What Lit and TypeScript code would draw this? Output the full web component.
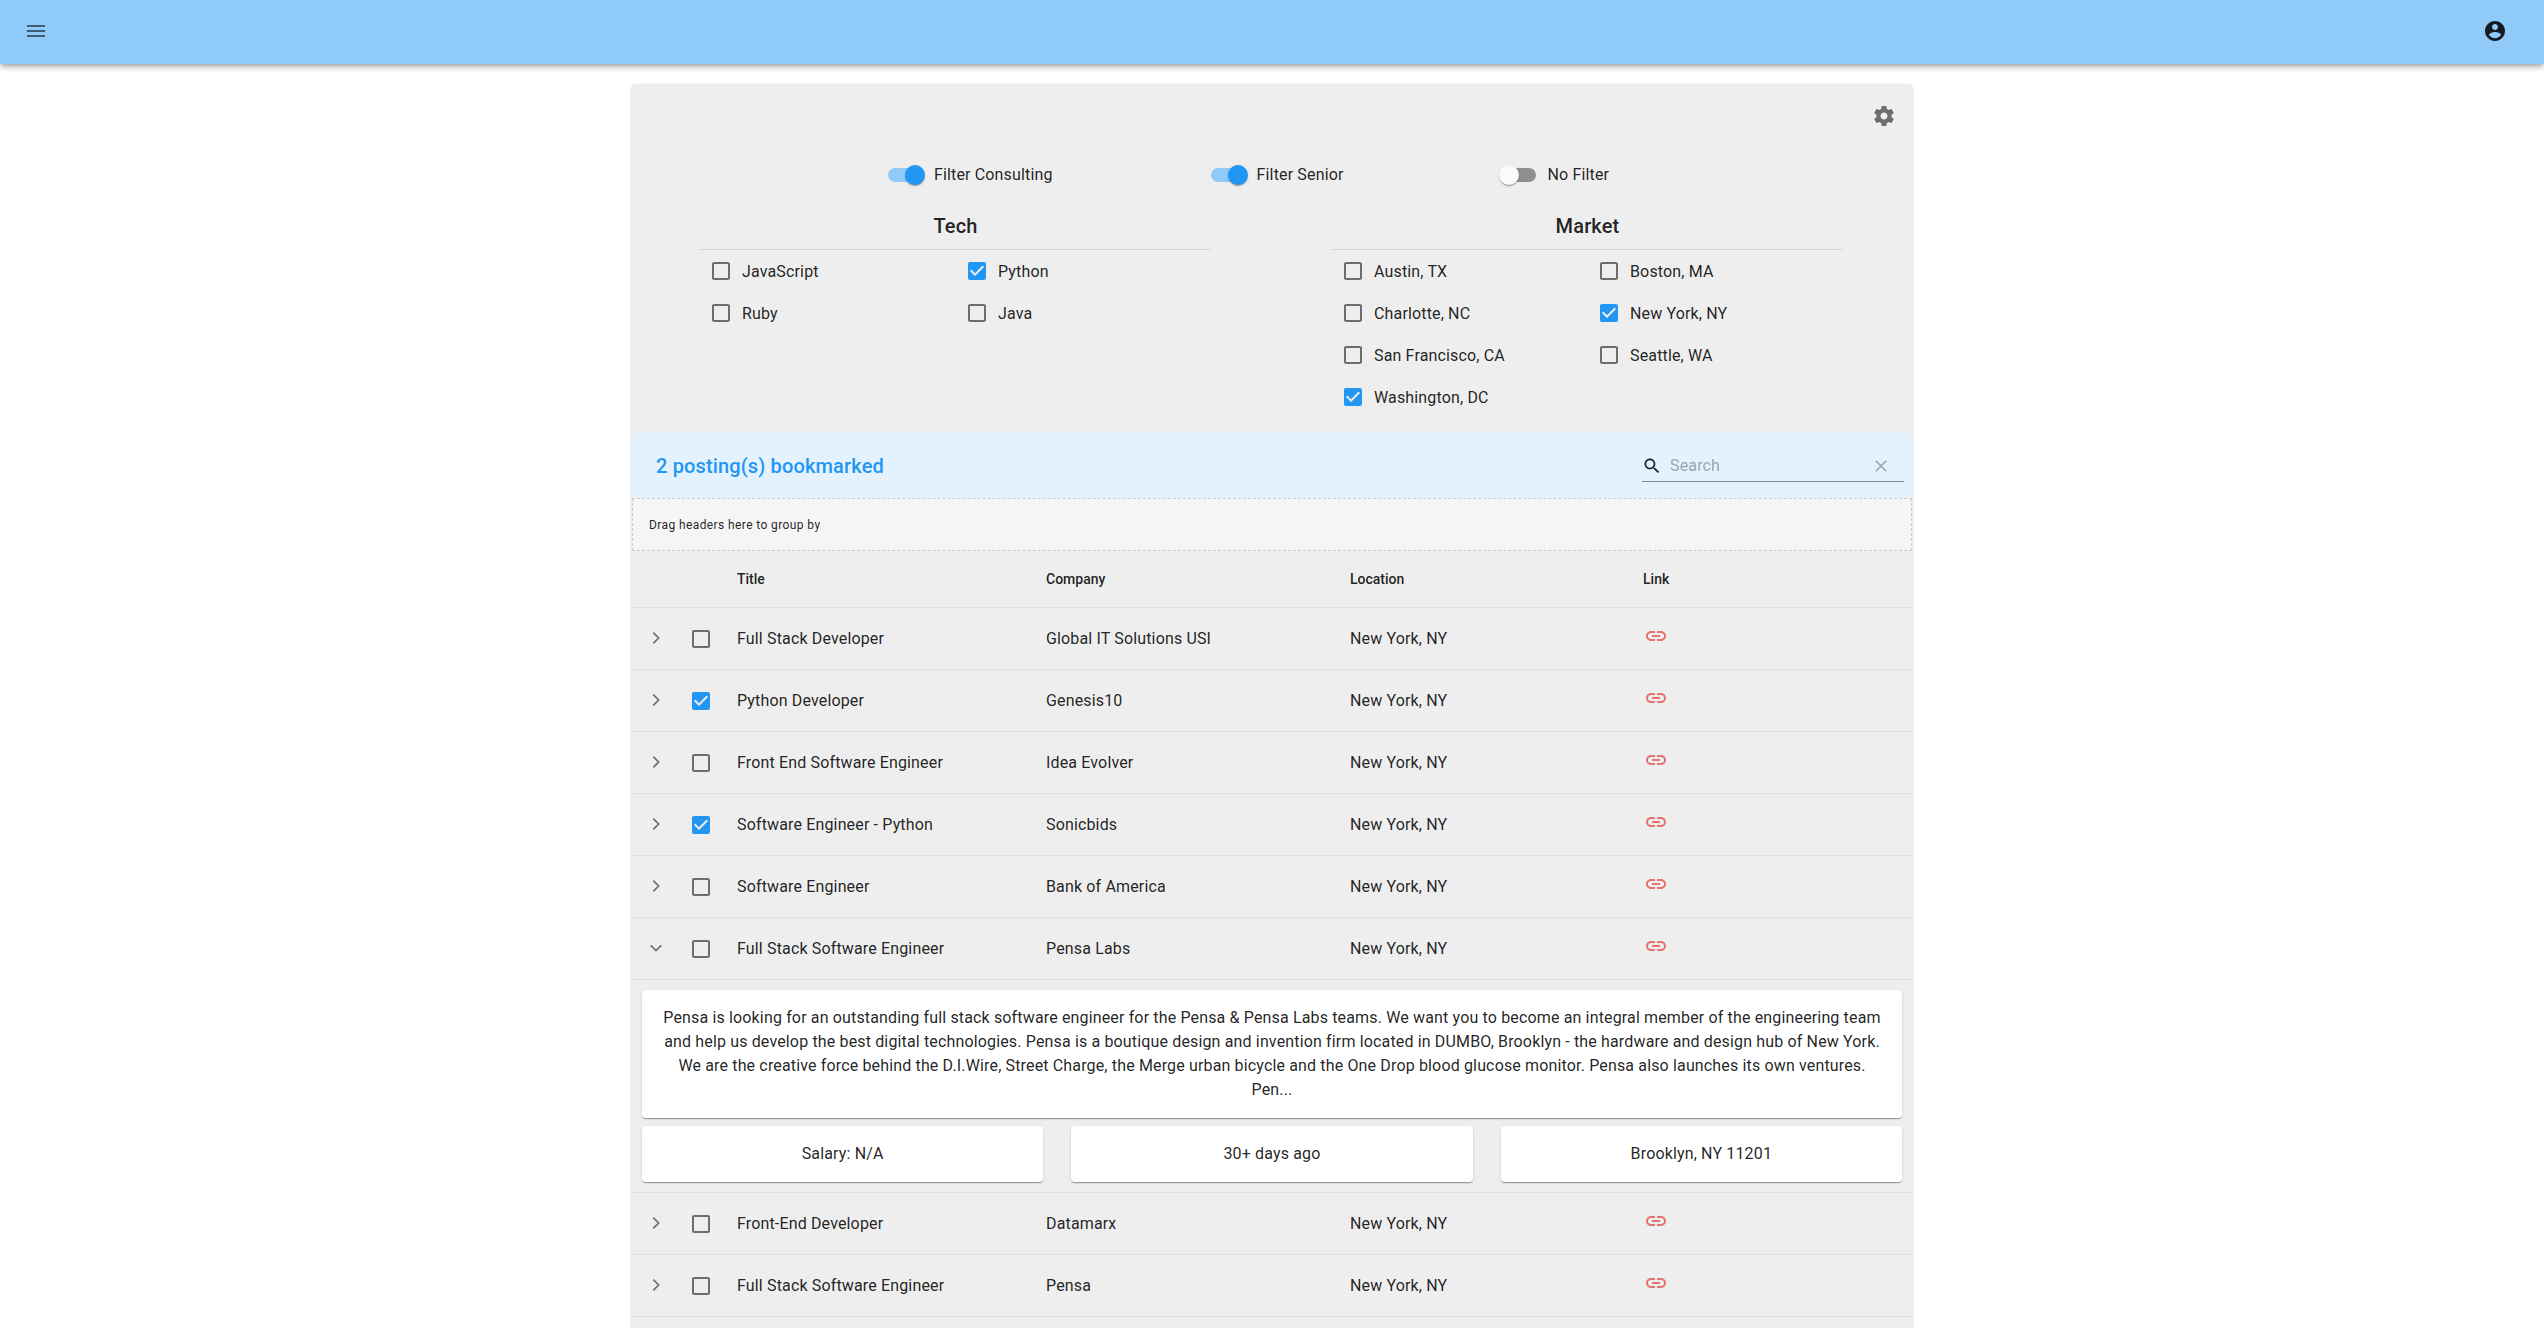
import { LitElement, html, css, svg } from 'lit';
import { customElement } from 'lit/decorators.js';

const BOX_OFF = 'M19 5v14H5V5h14m0-2H5c-1.1 0-2 .9-2 2v14c0 1.1.9 2 2 2h14c1.1 0 2-.9 2-2V5c0-1.1-.9-2-2-2z';
const BOX_ON = 'M19 3H5c-1.11 0-2 .9-2 2v14c0 1.1.89 2 2 2h14c1.11 0 2-.9 2-2V5c0-1.1-.89-2-2-2zm-9 14l-5-5 1.41-1.41L10 14.17l7.59-7.59L19 8l-9 9z';
const MENU = 'M3 18h18v-2H3v2zm0-5h18v-2H3v2zm0-7v2h18V6H3z';
const ACCOUNT = 'M12 2C6.48 2 2 6.48 2 12s4.48 10 10 10 10-4.48 10-10S17.52 2 12 2zm0 3c1.66 0 3 1.34 3 3s-1.34 3-3 3-3-1.34-3-3 1.34-3 3-3zm0 14.2c-2.5 0-4.71-1.28-6-3.22.03-1.99 4-3.08 6-3.08 1.99 0 5.97 1.09 6 3.08-1.29 1.94-3.5 3.22-6 3.22z';
const GEAR = 'M19.43 12.98c.04-.32.07-.64.07-.98s-.03-.66-.07-.98l2.11-1.65c.19-.15.24-.42.12-.64l-2-3.46c-.12-.22-.39-.3-.61-.22l-2.49 1c-.52-.4-1.08-.73-1.69-.98l-.38-2.65C14.46 2.18 14.25 2 14 2h-4c-.25 0-.46.18-.49.42l-.38 2.65c-.61.25-1.17.59-1.69.98l-2.49-1c-.23-.09-.49 0-.61.22l-2 3.46c-.13.22-.07.49.12.64l2.11 1.65c-.04.32-.07.65-.07.98s.03.66.07.98l-2.11 1.65c-.19.15-.24.42-.12.64l2 3.46c.12.22.39.3.61.22l2.49-1c.52.4 1.08.73 1.69.98l.38 2.65c.03.24.24.42.49.42h4c.25 0 .46-.18.49-.42l.38-2.65c.61-.25 1.17-.59 1.69-.98l2.49 1c.23.09.49 0 .61-.22l2-3.46c.12-.22.07-.49-.12-.64l-2.11-1.65zM12 15.5c-1.93 0-3.5-1.57-3.5-3.5s1.57-3.5 3.5-3.5 3.5 1.57 3.5 3.5-1.57 3.5-3.5 3.5z';
const SEARCH = 'M15.5 14h-.79l-.28-.27C15.41 12.59 16 11.11 16 9.5 16 5.91 13.09 3 9.5 3S3 5.91 3 9.5 5.91 16 9.5 16c1.61 0 3.09-.59 4.23-1.57l.27.28v.79l5 4.99L20.49 19l-4.99-5zm-6 0C7.01 14 5 11.99 5 9.5S7.01 5 9.5 5 14 7.01 14 9.5 11.99 14 9.5 14z';
const CLEAR = 'M19 6.41L17.59 5 12 10.59 6.41 5 5 6.41 10.59 12 5 17.59 6.41 19 12 13.41 17.59 19 19 17.59 13.41 12z';
const LINK = 'M3.9 12c0-1.71 1.39-3.1 3.1-3.1h4V7H7c-2.76 0-5 2.24-5 5s2.24 5 5 5h4v-1.9H7c-1.71 0-3.1-1.39-3.1-3.1zM8 13h8v-2H8v2zm9-6h-4v1.9h4c1.71 0 3.1 1.39 3.1 3.1s-1.39 3.1-3.1 3.1h-4V17h4c2.76 0 5-2.24 5-5s-2.24-5-5-5z';
const CHEV_RIGHT = 'M9.3 6.7L14.6 12L9.3 17.3';
const CHEV_DOWN = 'M6.7 9.3L12 14.6L17.3 9.3';

const icon = (d: string, cls = '') => html`<svg class="icon ${cls}" viewBox="0 0 24 24">${svg`<path d=${d}></path>`}</svg>`;

const TECH = [
  ['JavaScript', false], ['Python', true],
  ['Ruby', false], ['Java', false],
] as [string, boolean][];

const MARKET = [
  ['Austin, TX', false], ['Boston, MA', false],
  ['Charlotte, NC', false], ['New York, NY', true],
  ['San Francisco, CA', false], ['Seattle, WA', false],
  ['Washington, DC', true],
] as [string, boolean][];

const ROWS_TOP = [
  ['Full Stack Developer', 'Global IT Solutions USI', false],
  ['Python Developer', 'Genesis10', true],
  ['Front End Software Engineer', 'Idea Evolver', false],
  ['Software Engineer - Python', 'Sonicbids', true],
  ['Software Engineer', 'Bank of America', false],
] as [string, string, boolean][];

const ROWS_BOTTOM = [
  ['Front-End Developer', 'Datamarx', false],
  ['Full Stack Software Engineer', 'Pensa', false],
] as [string, string, boolean][];

const DESC = 'Pensa is looking for an outstanding full stack software engineer for the Pensa & Pensa Labs teams. We want you to become an integral member of the engineering team and help us develop the best digital technologies. Pensa is a boutique design and invention firm located in DUMBO, Brooklyn - the hardware and design hub of New York. We are the creative force behind the D.I.Wire, Street Charge, the Merge urban bicycle and the One Drop blood glucose monitor. Pensa also launches its own ventures. Pen...';

@customElement('app-root')
export class AppRoot extends LitElement {
  static styles = css`
    :host {
      display: block;
      height: 100vh;
      overflow: hidden;
      background: #fff;
      font-family: Roboto, sans-serif;
      letter-spacing: 0.00938em;
      color: rgba(0, 0, 0, 0.87);
    }
    .icon { width: 24px; height: 24px; flex: none; display: block; fill: currentColor; }

    .appbar {
      height: 64px;
      box-sizing: border-box;
      padding: 0 37px 2px 24px;
      background: #90caf9;
      display: flex;
      align-items: center;
      justify-content: space-between;
      box-shadow: 0 2px 4px -1px rgba(0,0,0,.2), 0 4px 5px rgba(0,0,0,.14), 0 1px 10px rgba(0,0,0,.12);
      position: relative;
    }
    .menu { color: rgba(0, 0, 0, 0.54); }

    .card {
      width: 1280px;
      margin: 20px auto 0;
      background: #eee;
      border-radius: 4px;
      min-height: 1300px;
      box-shadow: 0 1px 3px rgba(0,0,0,.2), 0 1px 1px rgba(0,0,0,.14);
    }

    .filters { height: 349px; box-sizing: border-box; padding-top: 20px; }
    .gear-row { display: flex; justify-content: flex-end; padding-right: 16px; color: rgba(0,0,0,.54); }
    .toggles { display: flex; gap: 158px; padding-left: 256px; margin-top: 35px; height: 24px; }
    .toggle { display: flex; align-items: center; font-size: 16px; line-height: 24px; }
    .switch { position: relative; width: 46px; height: 24px; flex: none; }
    .track { position: absolute; left: 0; top: 5px; width: 34px; height: 14px; border-radius: 7px; background: #8f8f8f; }
    .thumb {
      position: absolute; top: 2px; left: -3px; width: 20px; height: 20px; border-radius: 50%;
      background: #fafafa;
      box-shadow: 0 2px 1px -1px rgba(0,0,0,.2), 0 1px 1px rgba(0,0,0,.14), 0 1px 3px rgba(0,0,0,.12);
    }
    .on .track { background: #90caf9; }
    .on .thumb { left: 17px; background: #2196f3; }

    .groups { display: flex; gap: 121px; padding-left: 68px; margin-top: 23px; }
    .group { width: 511px; }
    .group h3 {
      margin: 0;
      font-size: 20px;
      font-weight: 500;
      line-height: 32px;
      text-align: center;
      padding-bottom: 7px;
      border-bottom: 1px solid #d5d5d5;
    }
    .opts { display: grid; grid-template-columns: 256px 255px; grid-auto-rows: 42px; }
    .opt { display: flex; align-items: center; font-size: 16px; }
    .opt .icon { margin: 9px; }

    .box { color: rgba(0, 0, 0, 0.54); }
    .box.checked { color: #2196f3; }

    .bar {
      height: 65px;
      box-sizing: border-box;
      background: #e3f2fd;
      display: flex;
      justify-content: space-between;
      padding: 17px 8px 0 24px;
    }
    .bar-title { font-size: 20px; font-weight: 500; line-height: 32px; color: #2196f3; }
    .search {
      width: 262px;
      height: 32px;
      box-sizing: border-box;
      border-bottom: 1px solid rgba(0, 0, 0, 0.42);
      display: flex;
      align-items: center;
      font-size: 16px;
      color: rgba(0, 0, 0, 0.35);
    }
    .search .s-icon { width: 20px; height: 20px; color: rgba(0,0,0,.87); margin: 0 8px 0 0; }
    .search span { flex: 1; }
    .search .c-icon { width: 20px; height: 20px; color: rgba(0,0,0,.3); margin-right: 13px; }

    .dropzone {
      height: 53px;
      box-sizing: border-box;
      border: 1px dashed #ccc;
      background: #f5f5f5;
      padding-left: 16px;
      display: flex;
      align-items: center;
      font-size: 12px;
      letter-spacing: 0.03333em;
    }

    .row {
      display: grid;
      grid-template-columns: 105px 309px 304px 293px 1fr;
      align-items: center;
      height: 62px;
      box-sizing: border-box;
      border-bottom: 1px solid #e0e0e0;
      font-size: 16px;
    }
    .row.head { height: 57px; font-size: 14px; font-weight: 500; letter-spacing: 0; }
    .controls { display: flex; align-items: center; padding-left: 12px; }
    .chev { color: rgba(0, 0, 0, 0.54); margin: 0 21px 2px 0; fill: none; stroke: currentColor; stroke-width: 1.7; }
    .link { color: #e57373; margin: 0 0 6px 1px; }

    .detail {
      padding: 10px;
      border-bottom: 1px solid #e0e0e0;
      display: grid;
      gap: 8px;
      font-size: 16px;
      text-align: center;
    }
    .paper {
      background: #fff;
      border-radius: 4px;
      padding: 16px;
      line-height: 24px;
      box-shadow: 0 2px 1px -1px rgba(0,0,0,.2), 0 1px 1px rgba(0,0,0,.14), 0 1px 3px rgba(0,0,0,.12);
    }
    .facts { display: grid; grid-template-columns: repeat(3, 1fr); gap: 28px; }
  `;

  private toggle(label: string, on: boolean) {
    return html`<div class="toggle ${on ? 'on' : ''}">
      <div class="switch"><div class="track"></div><div class="thumb"></div></div>
      ${label}
    </div>`;
  }

  private box(checked: boolean) {
    return icon(checked ? BOX_ON : BOX_OFF, checked ? 'box checked' : 'box');
  }

  private group(title: string, items: [string, boolean][]) {
    return html`<div class="group">
      <h3>${title}</h3>
      <div class="opts">
        ${items.map(([name, on]) => html`<div class="opt">${this.box(on)}${name}</div>`)}
      </div>
    </div>`;
  }

  private row([title, company, on]: [string, string, boolean], open = false) {
    return html`<div class="row">
      <div class="controls">${icon(open ? CHEV_DOWN : CHEV_RIGHT, 'chev')}${this.box(on)}</div>
      <div>${title}</div>
      <div>${company}</div>
      <div>New York, NY</div>
      <div>${icon(LINK, 'link')}</div>
    </div>`;
  }

  render() {
    return html`
      <div class="appbar">
        ${icon(MENU, 'menu')}
        ${icon(ACCOUNT)}
      </div>
      <div class="card">
        <div class="filters">
          <div class="gear-row">${icon(GEAR)}</div>
          <div class="toggles">
            ${this.toggle('Filter Consulting', true)}
            ${this.toggle('Filter Senior', true)}
            ${this.toggle('No Filter', false)}
          </div>
          <div class="groups">
            ${this.group('Tech', TECH)}
            ${this.group('Market', MARKET)}
          </div>
        </div>
        <div class="bar">
          <div class="bar-title">2 posting(s) bookmarked</div>
          <div class="search">
            ${icon(SEARCH, 's-icon')}
            <span>Search</span>
            ${icon(CLEAR, 'c-icon')}
          </div>
        </div>
        <div class="dropzone">Drag headers here to group by</div>
        <div class="row head">
          <div></div><div>Title</div><div>Company</div><div>Location</div><div>Link</div>
        </div>
        ${ROWS_TOP.map((r) => this.row(r))}
        ${this.row(['Full Stack Software Engineer', 'Pensa Labs', false], true)}
        <div class="detail">
          <div class="paper">${DESC}</div>
          <div class="facts">
            <div class="paper">Salary: N/A</div>
            <div class="paper">30+ days ago</div>
            <div class="paper">Brooklyn, NY 11201</div>
          </div>
        </div>
        ${ROWS_BOTTOM.map((r) => this.row(r))}
      </div>
    `;
  }
}
